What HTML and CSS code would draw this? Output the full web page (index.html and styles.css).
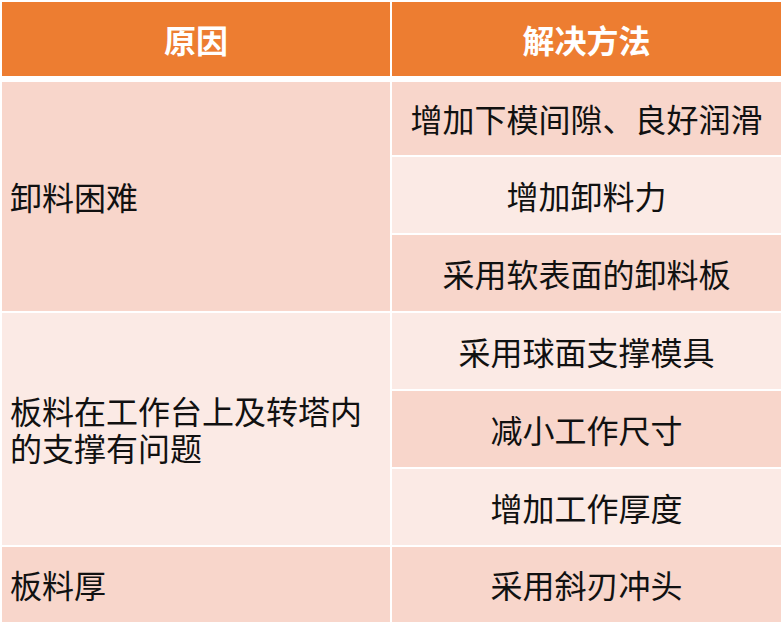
FILE: index.html
```html
<!DOCTYPE html>
<html lang="zh-CN">
<head>
<meta charset="utf-8">
<title>原因与解决方法</title>
<link rel="stylesheet" href="styles.css">
</head>
<body>
<div class="table">
  <div class="head-row">
    <div class="cell head">原因</div>
    <div class="cell head">解决方法</div>
  </div>
  <div class="body">
    <div class="cell cause dark span3">卸料困难</div>
    <div class="cell fix dark">增加下模间隙、良好润滑</div>
    <div class="cell fix light">增加卸料力</div>
    <div class="cell fix dark">采用软表面的卸料板</div>

    <div class="cell cause light span3">板料在工作台上及转塔内<br>的支撑有问题</div>
    <div class="cell fix light">采用球面支撑模具</div>
    <div class="cell fix dark">减小工作尺寸</div>
    <div class="cell fix light">增加工作厚度</div>

    <div class="cell cause dark">板料厚</div>
    <div class="cell fix dark">采用斜刃冲头</div>
  </div>
</div>
</body>
</html>
```

FILE: styles.css
```css
html, body {
  margin: 0;
  padding: 0;
  background: #ffffff;
}

body {
  font-family: "Noto Sans CJK SC", "Noto Sans", sans-serif;
  color: #111111;
}

.table {
  padding: 2px 0 0 2px;
  width: 779px;
}

.head-row,
.body {
  display: grid;
  grid-template-columns: 388px 389px;
  column-gap: 2px;
}

.head-row {
  grid-template-rows: 74px;
  margin-bottom: 6px;
}

.body {
  grid-template-rows: 73px 76px 76px 76px 76px 76px 75px;
  row-gap: 2px;
}

.cell {
  display: flex;
  align-items: center;
  font-size: 32px;
  line-height: 37px;
}

.head {
  background: #ED7D31;
  color: #ffffff;
  font-weight: 700;
  justify-content: center;
}

.cause {
  padding-left: 8px;
}

.fix {
  justify-content: center;
}

.span3 {
  grid-row: span 3;
}

.dark {
  background: #F8D6CB;
}

.light {
  background: #FBEAE5;
}
```
